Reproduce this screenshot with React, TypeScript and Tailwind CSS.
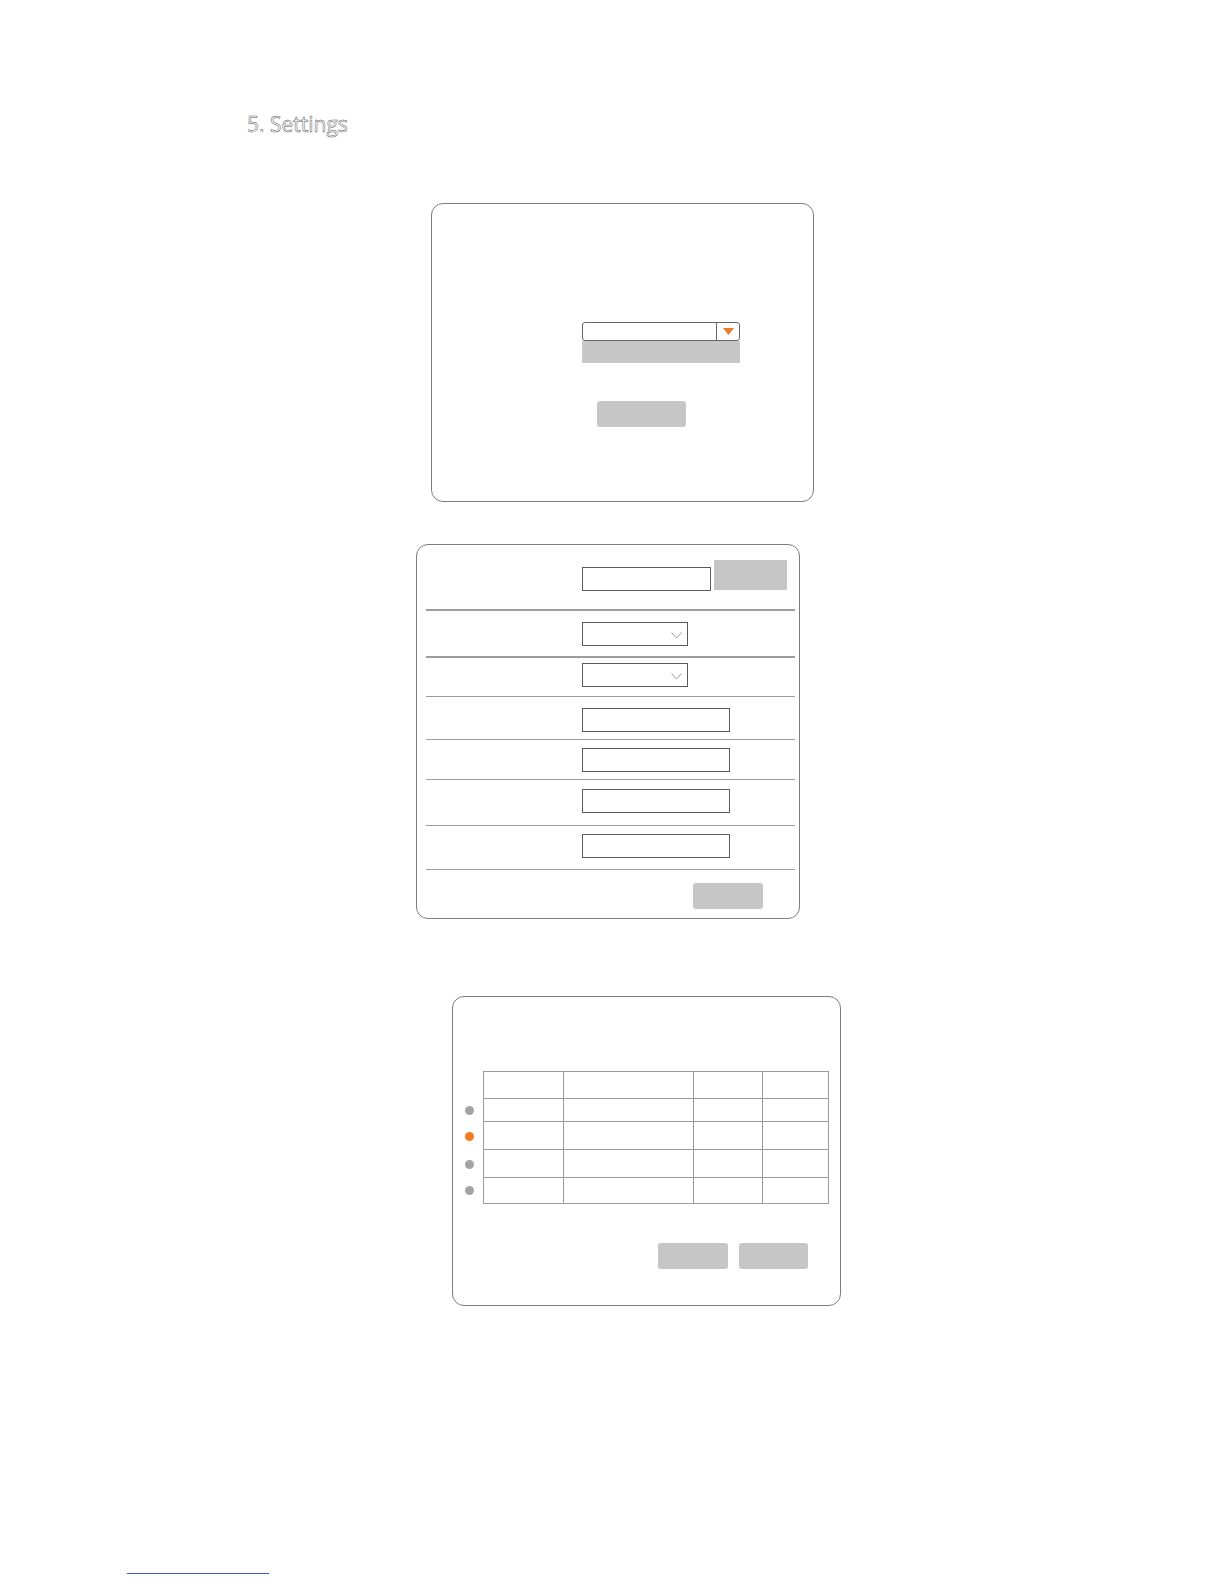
import React from 'react';

// plain gray block used for every button in the screens
const GrayButton: React.FC<{ className?: string }> = ({ className = '' }) => (
  <div className={`h-[26px] rounded-[3px] bg-[#c6c6c6] ${className}`} />
);

const TextBox: React.FC<{ w: string }> = ({ w }) => (
  <div className={`${w} h-[24px] border-[1.5px] border-[#5a5a5a] bg-white`} />
);

const SelectBox: React.FC = () => (
  <div className="w-[106px] h-[24px] border-[1.5px] border-[#5a5a5a] bg-white flex items-center justify-end pr-[5px] pt-[3px]">
    <svg width="11" height="7" viewBox="0 0 11 7" fill="none">
      <polyline points="0.5,0.5 5.5,6 10.5,0.5" stroke="#9a9a9a" strokeWidth="1" />
    </svg>
  </div>
);

const rows = [
  { h: 'h-[47px]', pt: 'pt-[11px]', line: 'border-b-2', kind: 'select' },
  { h: 'h-[39px]', pt: 'pt-[5px]', line: 'border-b', kind: 'select' },
  { h: 'h-[43px]', pt: 'pt-[11px]', line: 'border-b', kind: 'input' },
  { h: 'h-[40px]', pt: 'pt-[8px]', line: 'border-b', kind: 'input' },
  { h: 'h-[46px]', pt: 'pt-[9px]', line: 'border-b', kind: 'input' },
  { h: 'h-[44px]', pt: 'pt-[8px]', line: 'border-b', kind: 'input' },
];

const dots = [
  { h: 'h-[23px]', c: 'bg-[#a3a3a3]' },
  { h: 'h-[28px]', c: 'bg-[#f47b20]' },
  { h: 'h-[28px]', c: 'bg-[#a3a3a3]' },
  { h: 'h-[25px]', c: 'bg-[#a3a3a3]' },
];

const App: React.FC = () => {
  return (
    <div className="w-[1224px] min-h-[1584px] bg-white font-['Open_Sans',sans-serif]">
      <div className="pl-[247px] pt-[114px]">
        <h2 className="text-[21px] leading-none text-white [-webkit-text-stroke:0.5px_#555]">
          5. Settings
        </h2>
      </div>

      {/* first screen: dropdown + button */}
      <div className="ml-[431px] mt-[68px] w-[383px] h-[299px] rounded-[12px] border-[1.5px] border-[#7d7d7d] pt-[118px] pl-[150px]">
        <div className="w-[158px] h-[19px] flex border border-[#666] rounded-[3px] bg-white">
          <div className="flex-1" />
          <div className="w-[23px] border-l border-[#666] flex items-center justify-center">
            <svg width="11" height="7" viewBox="0 0 11 7">
              <polygon points="0,0 11,0 5.5,7" fill="#f07a22" />
            </svg>
          </div>
        </div>
        <div className="w-[158px] h-[22px] bg-[#c6c6c6]" />
        <GrayButton className="mt-[38px] ml-[15px] w-[89px]" />
      </div>

      {/* second screen: form rows */}
      <div className="ml-[416px] mt-[42px] w-[384px] h-[375px] rounded-[12px] border-[1.5px] border-[#7d7d7d] pl-[9px] pr-[4px]">
        <div className="h-[66px] border-b-2 border-[#9c9c9c] flex items-start pl-[156px]">
          <div className="mt-[22px]">
            <TextBox w="w-[129px]" />
          </div>
          <div className="mt-[15px] ml-[3px] w-[73px] h-[30px] bg-[#c6c6c6]" />
        </div>
        {rows.map((r, i) => (
          <div key={i} className={`${r.h} ${r.pt} ${r.line} border-[#9c9c9c] pl-[156px]`}>
            {r.kind === 'select' ? <SelectBox /> : <TextBox w="w-[148px]" />}
          </div>
        ))}
        <div className="pt-[13px] pl-[267px]">
          <GrayButton className="w-[70px] h-[25px]" />
        </div>
      </div>

      {/* third screen: list table */}
      <div className="ml-[452px] mt-[77px] w-[389px] h-[310px] rounded-[12px] border-[1.5px] border-[#7d7d7d] pl-[12px] pt-[74px]">
        <div className="flex gap-[9px]">
          <div className="w-[9px] pt-[28px] flex flex-col">
            {dots.map((d, i) => (
              <div key={i} className={`${d.h} flex items-center`}>
                <div className={`w-[9px] h-[9px] rounded-full ${d.c}`} />
              </div>
            ))}
          </div>
          <div className="grid grid-cols-[79px_129px_68px_65px] grid-rows-[26px_22px_27px_27px_25px] gap-px p-px bg-[#9a9a9a]">
            {Array.from({ length: 20 }).map((_, i) => (
              <div key={i} className="bg-white" />
            ))}
          </div>
        </div>
        <div className="mt-[39px] ml-[193px] flex gap-[11px]">
          <GrayButton className="w-[70px]" />
          <GrayButton className="w-[69px]" />
        </div>
      </div>

      <div className="ml-[127px] mt-[267px] w-[142px] h-px bg-[#3a5bc7]" />
    </div>
  );
};

export default App;
